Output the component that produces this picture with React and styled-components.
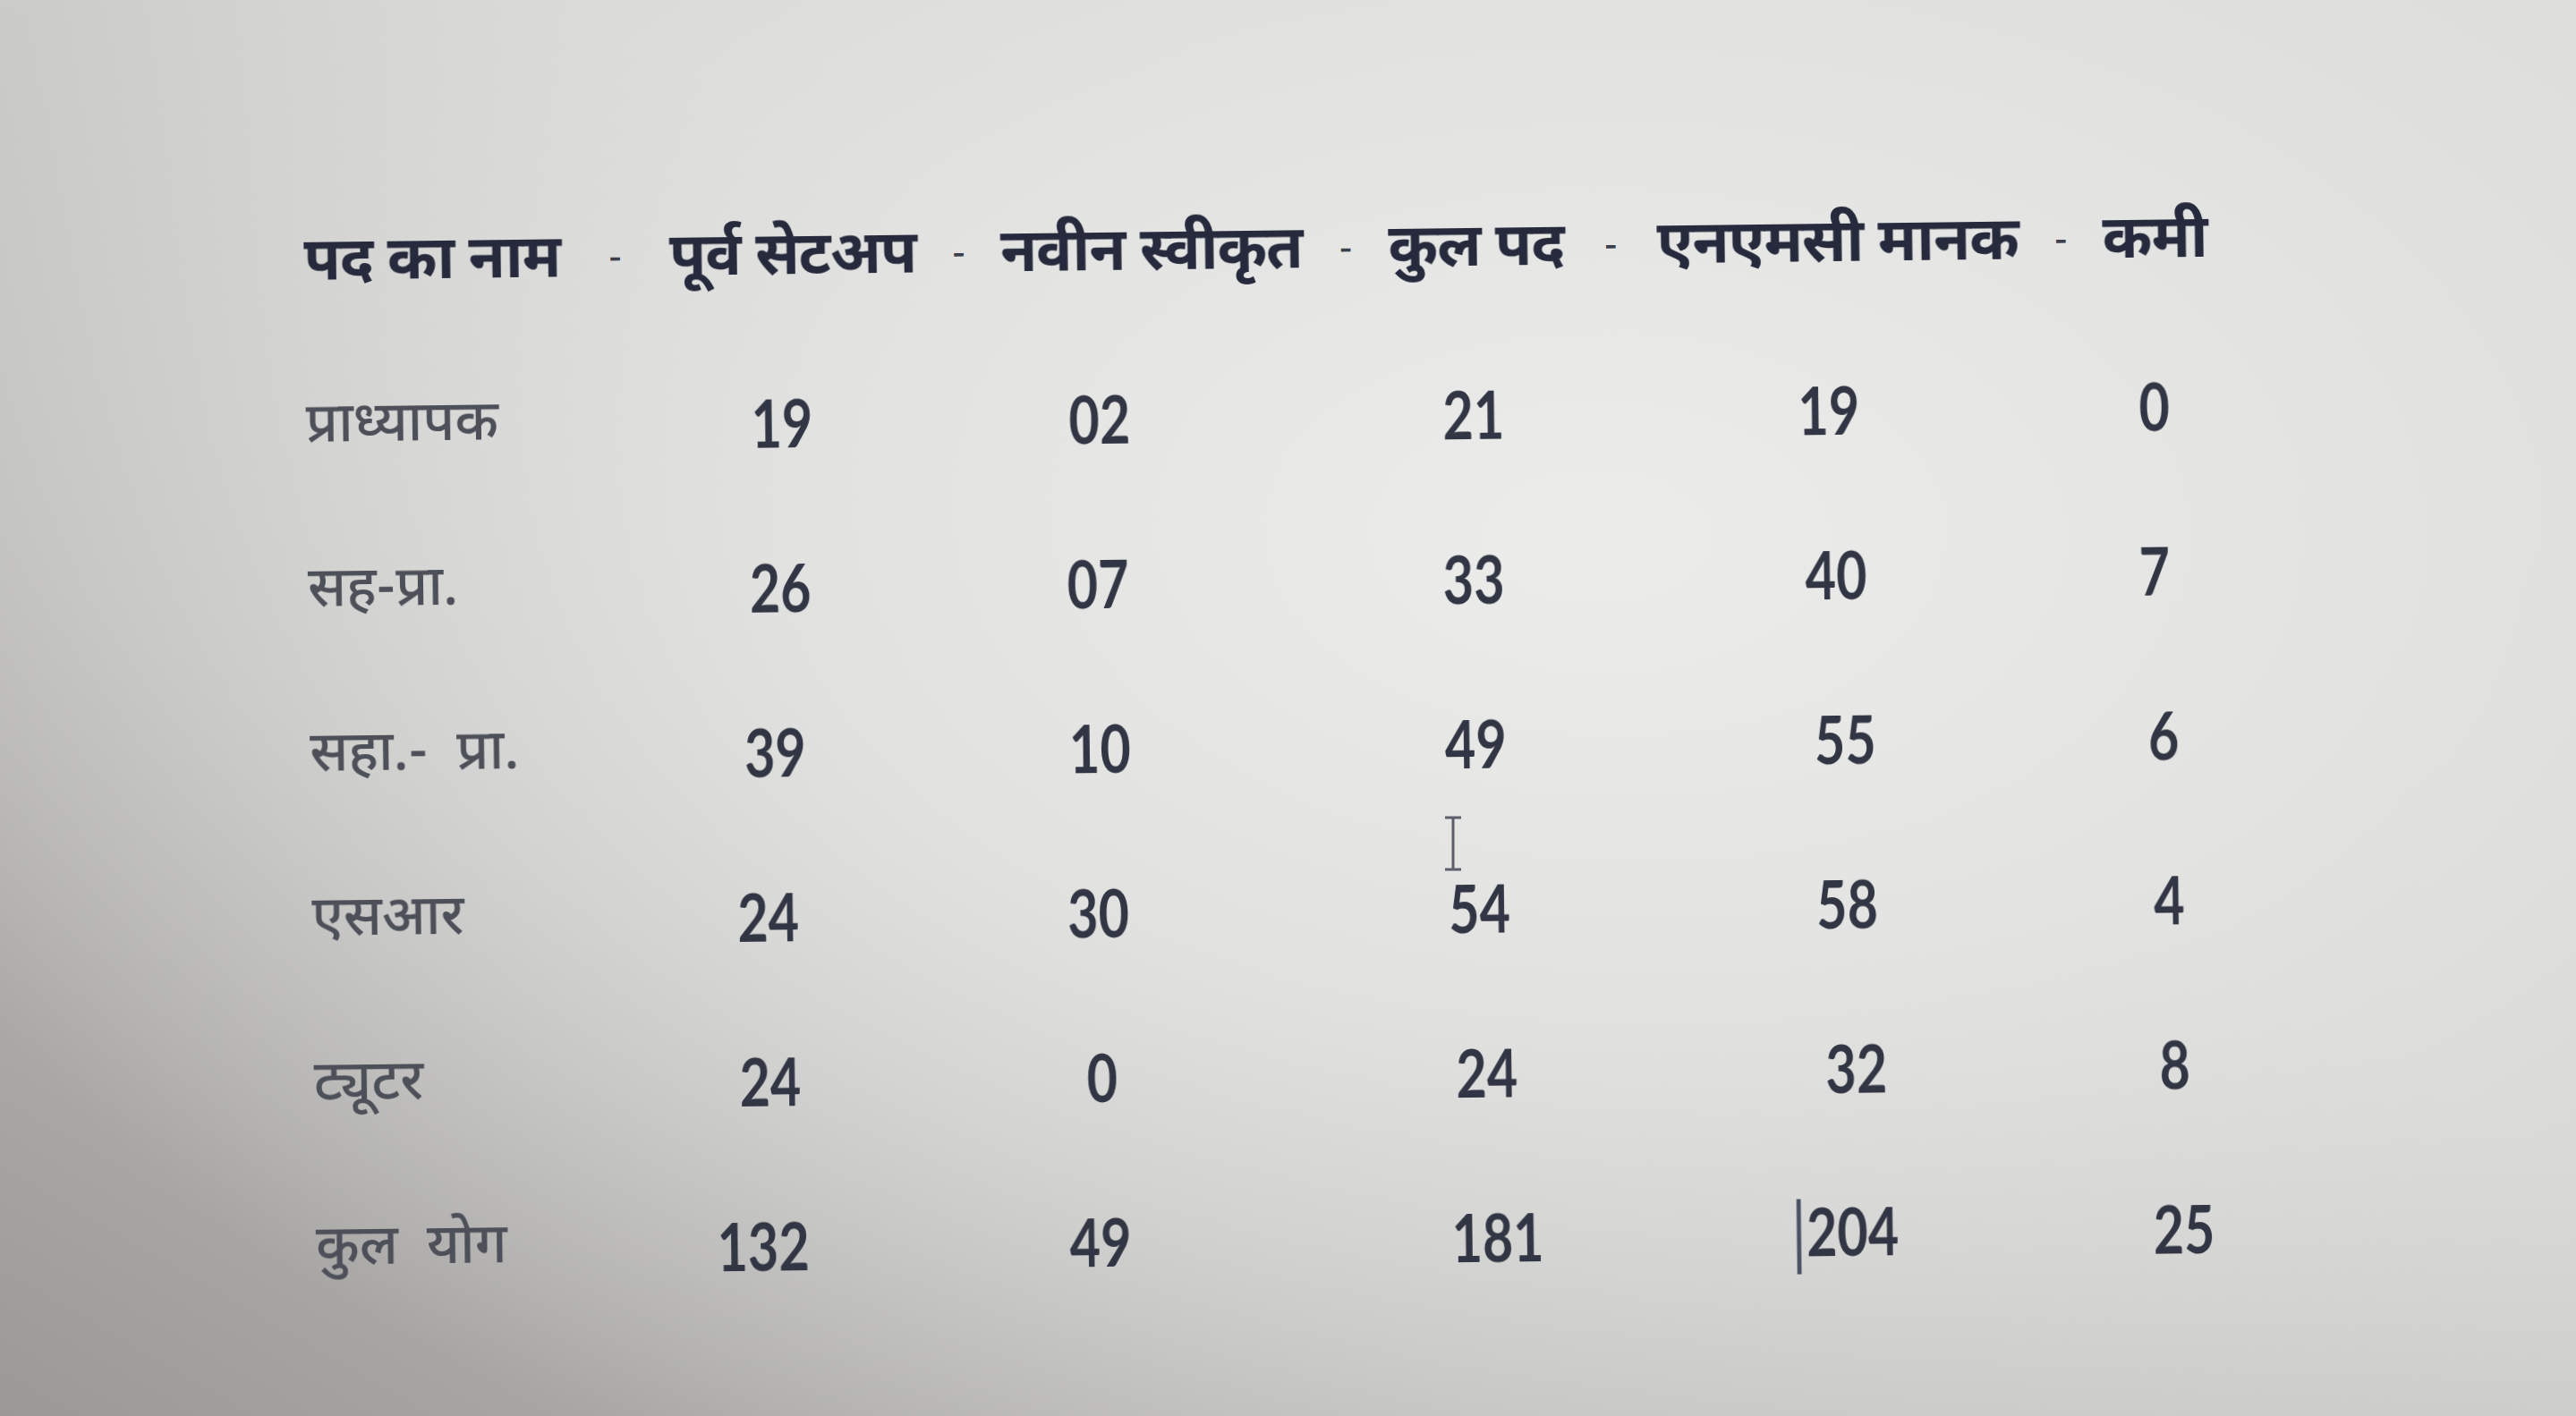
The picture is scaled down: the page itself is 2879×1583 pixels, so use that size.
import React from 'react';
import styled, { createGlobalStyle } from 'styled-components';

const GlobalStyle = createGlobalStyle`
  html, body {
    margin: 0;
    padding: 0;
    overflow: hidden;
  }
`;

const Screen = styled.div`
  position: relative;
  width: 2879px;
  height: 1583px;
  overflow: hidden;
  background:
    radial-gradient(ellipse 70% 75% at 62% 38%, rgba(236, 237, 235, 1) 0%, rgba(228, 229, 227, 0.9) 45%, rgba(210, 210, 208, 0) 100%),
    linear-gradient(30deg, #9b9997 0%, #bdbcba 30%, #d4d4d2 60%, #d8d8d6 100%);
`;

const Sheet = styled.div`
  padding: 250px 0 0 336px;
  transform: rotate(-0.7deg);
  transform-origin: 0 0;
`;

const HeaderLine = styled.div`
  display: flex;
  align-items: center;
  height: 100px;
  font-family: "Noto Sans Devanagari", "Noto Sans", sans-serif;
  font-size: 67px;
  font-weight: 700;
  color: #262a3c;
  white-space: pre;
  letter-spacing: -1px;
`;

const Term = styled.span`
  filter: blur(0.4px);
`;

const Dash = styled.span`
  font-weight: 400;
  font-size: 44px;
  color: #3c3f4c;
  margin: 0 ${p => p.$gap}px;
`;

const Table = styled.div`
  display: grid;
  grid-template-columns: 340px 360px 366px 486px 336px 380px;
  grid-auto-rows: 184px;
  margin-top: 40px;
  align-items: center;
`;

const Label = styled.div`
  font-family: "Noto Sans Devanagari", "Noto Sans", sans-serif;
  font-size: 62px;
  font-weight: 500;
  color: #4d5059;
  white-space: pre;
  filter: blur(0.7px);
`;

const Num = styled.div`
  font-family: Lato, "Open Sans", sans-serif;
  font-size: 74px;
  font-weight: 700;
  color: #323543;
  text-align: center;
  filter: blur(0.5px);
  transform: translateX(${p => p.$shift || 0}px) scaleX(0.8);
`;

const Caret = styled.span`
  display: inline-block;
  width: 6px;
  height: 84px;
  background: #4c5266;
  vertical-align: -20px;
  margin-right: 8px;
`;

const IBeam = styled.svg`
  position: absolute;
  left: 1611px;
  top: 912px;
  width: 26px;
  height: 62px;
`;

const heading = [
  ['पद का नाम', 54],
  ['पूर्व सेटअप', 40],
  ['नवीन स्वीकृत', 41],
  ['कुल पद', 45],
  ['एनएमसी मानक', 40],
  ['कमी'],
];

const rows = [
  ['प्राध्यापक', '19', '02', '21', '19', '0'],
  ['सह-प्रा.', '26', '07', '33', '40', '7'],
  ['सहा.-  प्रा.', '39', '10', '49', '55', '6'],
  ['एसआर', '24', '30', '54', '58', '4'],
  ['ट्यूटर', '24', '0', '24', '32', '8'],
  ['कुल  योग', '132', '49', '181', '204', '25'],
];

const shifts = [
  [12, 4, -4, -18, -12],
  [8, 0, -6, -12, -14],
  [0, 0, -6, -4, -6],
  [-10, -4, -4, -4, -2],
  [-10, -2, 2, 4, 2],
  [-20, -6, 12, -8, 10],
];

export default function App() {
  return (
    <Screen>
      <GlobalStyle />
      <Sheet>
        <HeaderLine>
          {heading.map(([text, gap], i) => (
            <React.Fragment key={i}>
              <Term>{text}</Term>
              {gap && <Dash $gap={gap}>-</Dash>}
            </React.Fragment>
          ))}
        </HeaderLine>
        <Table>
          {rows.map((row, r) => (
            <React.Fragment key={r}>
              <Label>{row[0]}</Label>
              {row.slice(1).map((v, c) => (
                <Num key={c} $shift={shifts[r][c]}>
                  {r === 5 && c === 3 && <Caret />}
                  {v}
                </Num>
              ))}
            </React.Fragment>
          ))}
        </Table>
      </Sheet>
      <IBeam viewBox="0 0 26 62">
        <path d="M4 2 H22 M13 2 V60 M4 60 H22" stroke="#5a5e6a" strokeWidth="3" fill="none" />
      </IBeam>
    </Screen>
  );
}
